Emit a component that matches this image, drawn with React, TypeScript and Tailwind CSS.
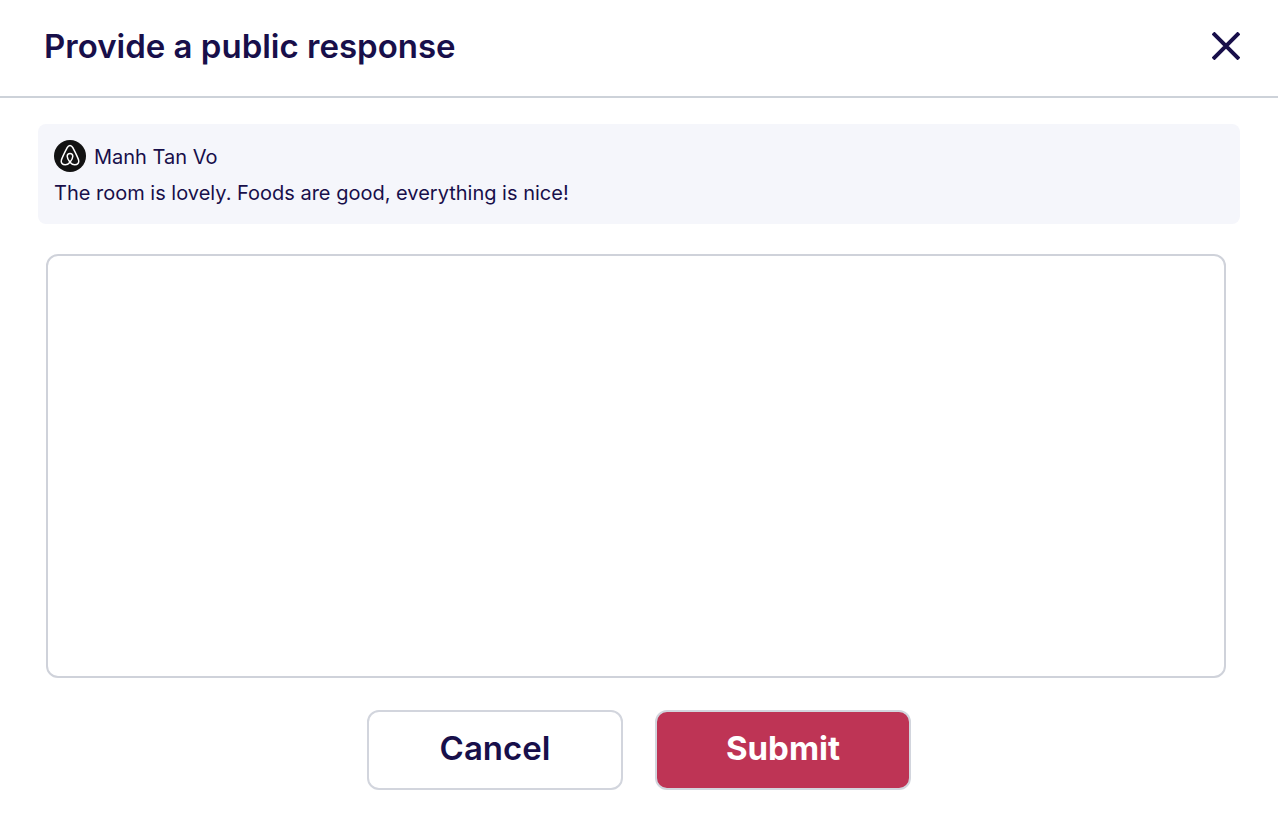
import type { ReactNode } from 'react';

type ActionButtonProps = {
  type?: 'button' | 'submit';
  className: string;
  children: ReactNode;
};

function ActionButton({ type = 'button', className, children }: ActionButtonProps) {
  return (
    <button
      type={type}
      className={`w-64 h-20 rounded-xl border-2 text-[33px] leading-10 ${className}`}
    >
      {children}
    </button>
  );
}

function AirbnbBadge() {
  return (
    <svg viewBox="0 0 32 32" className="w-8 h-8 shrink-0" aria-hidden="true">
      <circle cx="16" cy="16" r="16" fill="#121212" />
      <path
        d="M16 22.2C14 19.8 13.2 18 13.2 16.3A2.8 2.8 0 0 1 18.8 16.3C18.8 18 18 19.8 16 22.2C14.6 23.9 13 24.8 11.3 24.8C8.4 24.8 6.6 22.7 7.4 20.1C8.1 18 12.2 9.6 13.2 7.7C13.9 6.3 14.8 5.5 16 5.5C17.2 5.5 18.1 6.3 18.8 7.7C19.8 9.6 23.9 18 24.6 20.1C25.4 22.7 23.6 24.8 20.7 24.8C19 24.8 17.4 23.9 16 22.2Z"
        fill="none"
        stroke="#fff"
        strokeWidth="1.5"
        strokeLinejoin="round"
      />
    </svg>
  );
}

export default function App() {
  return (
    <form
      className="min-h-screen bg-white text-[#180f4a] font-['Inter',sans-serif]"
      onSubmit={(e) => e.preventDefault()}
    >
      <header className="flex items-center justify-between border-b-2 border-[#cdd2d9] pt-[26px] pb-[30px] pl-11 pr-9">
        <h1 id="response-title" className="text-[33px] leading-10 font-semibold">
          Provide a public response
        </h1>
        <button type="button" aria-label="Close" className="p-0.5">
          <svg viewBox="0 0 28 28" className="w-7 h-7" aria-hidden="true">
            <path d="M1 1L27 27M27 1L1 27" stroke="currentColor" strokeWidth="4" />
          </svg>
        </button>
      </header>

      <main className="pt-[26px] px-[38px] pb-9">
        {/* Guest review */}
        <section className="h-[100px] rounded-lg bg-[#f5f6fb] px-4 pt-4 text-[20px] leading-[34px]">
          <div className="flex h-8 items-start gap-2">
            <AirbnbBadge />
            <span>Manh Tan Vo</span>
          </div>
          <p className="mt-1">The room is lovely. Foods are good, everything is nice!</p>
        </section>

        <div className="mt-[30px] pl-2 pr-[14px]">
          <textarea
            aria-labelledby="response-title"
            className="block w-full h-[424px] resize-none rounded-xl border-2 border-[#cfd2da] p-4 text-[20px] outline-none"
          />
        </div>

        <div className="mt-8 flex justify-center gap-8">
          <ActionButton className="bg-white border-[#d2d5dd] pb-1 font-semibold">Cancel</ActionButton>
          <ActionButton type="submit" className="bg-[#be3455] border-[#d2d5dd] pb-1 text-white font-bold">
            Submit
          </ActionButton>
        </div>
      </main>
    </form>
  );
}
